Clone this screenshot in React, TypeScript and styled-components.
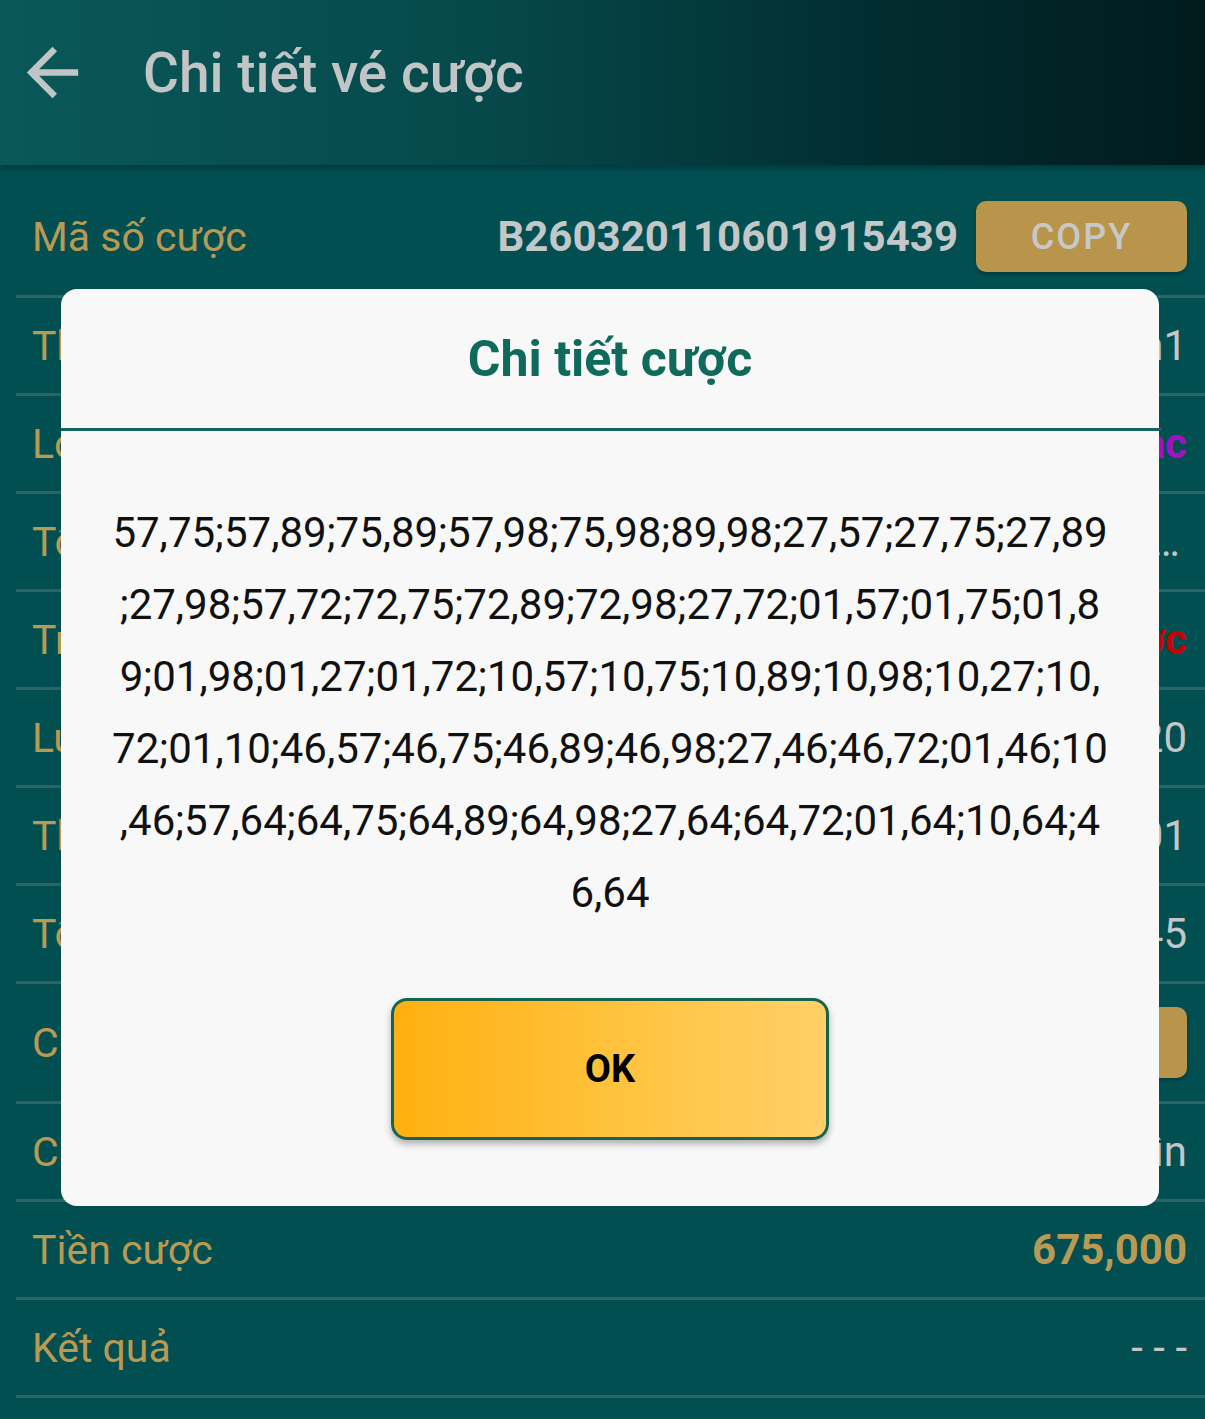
import React from "react";
import styled, { createGlobalStyle } from "styled-components";

const GlobalStyle = createGlobalStyle`
    html, body {
        margin: 0;
        padding: 0;
        background-color: #024f52;
        font-family: Roboto, "Noto Sans", "Liberation Sans", sans-serif;
    }
`;

const Page = styled.div`
    position: relative;
    width: 1205px;
    min-height: 1419px;
    background-color: #024f52;
    overflow: hidden;
`;

const Header = styled.div`
    position: relative;
    z-index: 2;
    height: 165px;
    display: flex;
    align-items: center;
    padding-bottom: 20px;
    box-sizing: border-box;
    background: linear-gradient(90deg, #0a5859 0%, #06494b 40%, #022f32 70%, #011b1d 100%);
    box-shadow: 0 3px 6px rgba(0, 0, 0, 0.3);
`;

const BackButton = styled.div`
    width: 77px;
    height: 77px;
    margin-left: 14px;
    display: flex;
    svg {
        width: 77px;
        height: 77px;
        fill: #c2c5c5;
    }
`;

const Title = styled.div`
    margin-left: 52px;
    font-size: 55px;
    font-weight: 500;
    color: #c2c5c5;
`;

const List = styled.div`
    margin-left: 16px;
    padding-top: 13px;
`;

const Row = styled.div<{ $tall?: boolean }>`
    display: flex;
    align-items: center;
    justify-content: space-between;
    min-height: ${(p) => (p.$tall ? 117 : 95)}px;
    padding: 0 18px 0 16px;
    border-bottom: 3px solid #2c6567;
    white-space: nowrap;
`;

const Label = styled.div`
    font-size: 41px;
    color: #b99a52;
`;

const Value = styled.div<{ $color?: string; $bold?: boolean }>`
    font-size: 42px;
    color: ${(p) => p.$color || "#c3c7c7"};
    font-weight: ${(p) => (p.$bold ? 700 : 400)};
    max-width: 760px;
    overflow: hidden;
    text-overflow: ellipsis;
`;

const RightGroup = styled.div`
    display: flex;
    align-items: center;
    gap: 18px;
`;

const GoldButton = styled.div`
    display: flex;
    align-items: center;
    justify-content: center;
    width: 211px;
    height: 71px;
    border-radius: 10px;
    background-color: #b8954a;
    color: #c8c8c8;
    font-size: 36px;
    font-weight: 500;
    letter-spacing: 2px;
    box-shadow: 0 2px 4px rgba(0, 0, 0, 0.3);
`;

const Dialog = styled.div`
    position: absolute;
    z-index: 5;
    top: 289px;
    left: 61px;
    width: 1098px;
    border-radius: 16px;
    background-color: #f8f8f8;
    display: flex;
    flex-direction: column;
    align-items: center;
`;

const DialogTitle = styled.div`
    align-self: stretch;
    height: 139px;
    display: flex;
    align-items: center;
    justify-content: center;
    font-size: 50px;
    font-weight: 700;
    color: #0f6a5c;
    border-bottom: 3px solid #15645a;
`;

const DialogText = styled.div`
    width: 999px;
    margin-top: 66px;
    font-size: 42px;
    line-height: 72px;
    color: #111111;
    text-align: center;
    word-break: break-all;
    line-break: anywhere;
`;

const OkButton = styled.div`
    margin: 69px 0 66px;
    width: 438px;
    height: 142px;
    box-sizing: border-box;
    border: 3px solid #17634f;
    border-radius: 16px;
    background: linear-gradient(90deg, #ffb010 0%, #ffc23c 50%, #ffd068 100%);
    display: flex;
    align-items: center;
    justify-content: center;
    font-size: 38px;
    font-weight: 700;
    color: #000000;
    box-shadow: 0 4px 7px rgba(0, 0, 0, 0.3);
`;

const combos =
    "57,75;57,89;75,89;57,98;75,98;89,98;27,57;27,75;27,89;27,98;57,72;72,75;72,89;72,98;27,72;01,57;01,75;01,89;01,98;01,27;01,72;10,57;10,75;10,89;10,98;10,27;10,72;01,10;46,57;46,75;46,89;46,98;27,46;46,72;01,46;10,46;57,64;64,75;64,89;64,98;27,64;64,72;01,64;10,64;46,64";

const rows = [
    { label: "Thành viên", value: "tuannguyen1" },
    { label: "Loại xổ số", value: "Miền Bắc", color: "#a312c2", bold: true },
    { label: "Tổ hợp", value: combos },
    { label: "Trạng thái", value: "Đã đặt cược", color: "#c40404", bold: true },
    { label: "Lượt xổ", value: "20260320" },
    { label: "Thời gian", value: "20/03/2026 11:06:01" },
    { label: "Tổng số cặp", value: "45" },
];

function App() {
    return (
        <Page>
            <GlobalStyle />
            <Header>
                <BackButton>
                    <svg viewBox="0 0 24 24">
                        <path d="M20 11H7.83l5.59-5.59L12 4l-8 8 8 8 1.41-1.41L7.83 13H20v-2z" />
                    </svg>
                </BackButton>
                <Title>Chi tiết vé cược</Title>
            </Header>
            <List>
                <Row $tall>
                    <Label>Mã số cược</Label>
                    <RightGroup>
                        <Value $bold>B260320110601915439</Value>
                        <GoldButton>COPY</GoldButton>
                    </RightGroup>
                </Row>
                {rows.map((r) => (
                    <Row key={r.label}>
                        <Label>{r.label}</Label>
                        <Value $color={r.color} $bold={r.bold}>{r.value}</Value>
                    </Row>
                ))}
                <Row $tall>
                    <Label>Cách chơi</Label>
                    <GoldButton>CHI TIẾT</GoldButton>
                </Row>
                <Row>
                    <Label>Chế độ</Label>
                    <Value>Tiền nghìn</Value>
                </Row>
                <Row>
                    <Label>Tiền cược</Label>
                    <Value $color="#b99a52" $bold>675,000</Value>
                </Row>
                <Row>
                    <Label>Kết quả</Label>
                    <Value>- - -</Value>
                </Row>
            </List>
            <Dialog>
                <DialogTitle>Chi tiết cược</DialogTitle>
                <DialogText>{combos}</DialogText>
                <OkButton>OK</OkButton>
            </Dialog>
        </Page>
    );
}

export default App;
